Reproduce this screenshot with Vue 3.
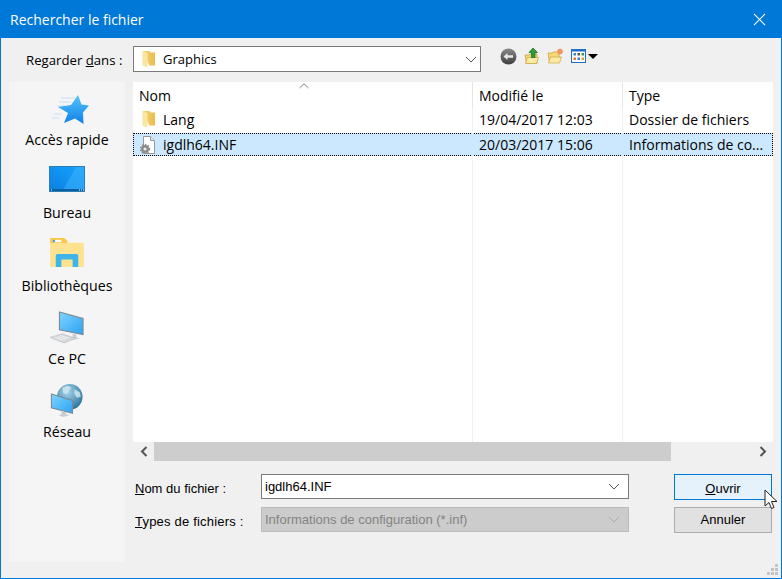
<template>
  <div class="window">
    <div class="titlebar">
      <span class="title">Rechercher le fichier</span>
      <svg class="close" width="13" height="13" viewBox="0 0 14 14"><path d="M1 1L13 13M13 1L1 13" stroke="#fff" stroke-width="1.1" fill="none" /></svg>
    </div>

    <div class="lookin">
      <label class="lookin-label">Regarder <u>d</u>ans :</label>
      <div class="combo">
        <svg class="folder" width="16" height="18" viewBox="0 0 16 18">
          <defs>
            <linearGradient id="fd" x1="0" y1="0" x2="1" y2="0"><stop offset="0" stop-color="#f6d777" /><stop offset="1" stop-color="#e9bb4c" /></linearGradient>
          </defs>
          <path d="M2.500 1h7l1 1.500h4.500v13l-6 0v-1z" fill="url(#fd)" />
          <path d="M2.500 1l5 2v14.500l-5-2z" fill="#fbe6a0" />
        </svg>
        <span class="combo-text">Graphics</span>
        <svg class="chev" width="12" height="7" viewBox="0 0 12 7"><path d="M1 1l5 5 5-5" stroke="#555" fill="none" /></svg>
      </div>
      <div class="tools">
        <svg width="17" height="17" viewBox="0 0 17 17">
          <defs>
            <linearGradient id="bk" x1="0" y1="0" x2="0" y2="1"><stop offset="0" stop-color="#8a8a8a" /><stop offset="1" stop-color="#3e3e3e" /></linearGradient>
          </defs>
          <circle cx="8.500" cy="8.500" r="8" fill="url(#bk)" />
          <path d="M3.500 8.500l4-3.500v2.300h5.500v2.400H7.500V12z" fill="#e8e8e8" />
        </svg>
        <svg width="16" height="18" viewBox="0 0 16 18">
          <path d="M1 8h4l1-1h7v9.500H2.500z" fill="#f5d778" stroke="#c9a540" stroke-width=".8" />
          <path d="M1.500 16.500l2-6h11l-2 6z" fill="#fbe9a6" stroke="#c9a540" stroke-width=".7" />
          <path d="M9 1L13.500 5.500H11V10.500H7.500V5.500H5z" fill="#2f9e3a" stroke="#14691f" stroke-width=".7" />
        </svg>
        <svg width="17" height="16" viewBox="0 0 17 16">
          <path d="M1 5h4l1-1h6v10.500H2.500z" fill="#f5d778" stroke="#c9a540" stroke-width=".8" />
          <path d="M1.500 15l2-6h11l-2 6z" fill="#fbe9a6" stroke="#c9a540" stroke-width=".7" />
          <circle cx="13" cy="3.500" r="2.500" fill="#ef7a3a" />
          <path d="M13 0v7M9.500 3.500h7M10.500 1l5 5M15.500 1l-5 5" stroke="#f2a26e" stroke-width=".7" />
        </svg>
        <div class="views">
          <svg width="15" height="14" viewBox="0 0 15 14">
            <rect x=".5" y=".5" width="14" height="13" fill="#fff" stroke="#1f6fc4" />
            <rect x="0" y="0" width="15" height="2.500" fill="#1f6fc4" />
            <rect x="2.500" y="4" width="2.500" height="2.500" fill="#3d7fd0" />
            <rect x="6.500" y="4" width="2.500" height="2.500" fill="#555" />
            <rect x="10.500" y="4" width="2.500" height="2.500" fill="#3f9a4a" />
            <rect x="2.500" y="8.500" width="2.500" height="2.500" fill="#e0703a" />
            <rect x="6.500" y="8.500" width="2.500" height="2.500" fill="#3d7fd0" />
            <rect x="10.500" y="8.500" width="2.500" height="2.500" fill="#d9a32e" />
          </svg>
          <span class="caret"></span>
        </div>
      </div>
    </div>

    <div class="content">
      <aside class="sidebar">
        <div class="place star">
          <svg width="38" height="30" viewBox="0 0 38 30">
            <defs>
              <linearGradient id="st" x1="0" y1="0" x2="0" y2="1"><stop offset="0" stop-color="#56c4ff" /><stop offset="1" stop-color="#0f80e6" /></linearGradient>
            </defs>
            <path d="M10 3h14M8 7h12M6 11h8M3 19h8M1 23h7" stroke="#c3e0f5" stroke-width="1" />
            <path d="M27 0l3.500 9.500 7.500 1-6 7 .500 11.500-8.500-5.500-11 4.500 4-10-10-6 13-2z" fill="url(#st)" />
          </svg>
          <span>Accès rapide</span>
        </div>
        <div class="place desk">
          <svg width="36" height="26" viewBox="0 0 36 26">
            <defs>
              <linearGradient id="ds" x1="0" y1="1" x2="1" y2="0"><stop offset="0" stop-color="#0a7fe0" /><stop offset="1" stop-color="#18a4ff" /></linearGradient>
            </defs>
            <rect x=".5" y=".5" width="35" height="25" fill="url(#ds)" stroke="#2a7fb8" />
            <path d="M14 24L27 1h8v23z" fill="#3eb0fb" opacity=".55" />
            <rect x="1" y="23" width="34" height="2" fill="#0b5f9e" />
            <path d="M30 24h1M32 24h1M34 24h1M2 24h1" stroke="#fff" />
          </svg>
          <span>Bureau</span>
        </div>
        <div class="place libs">
          <svg width="36" height="31" viewBox="0 0 36 31">
            <path d="M0 1a1 1 0 0 1 1-1h14l3.500 3v3H0z" fill="#f7c948" />
            <rect x="3" y="2" width="9" height="2.500" fill="#fff" />
            <rect x="3" y="2" width="2" height="2.500" fill="#2a9fe8" />
            <path d="M0 6h18l1-1h17v26H0z" fill="#fde28f" />
            <path d="M6 31V19a2 2 0 0 1 2-2h20a2 2 0 0 1 2 2v12h-6V23H12v8z" fill="#3db4ea" />
          </svg>
          <span>Bibliothèques</span>
        </div>
        <div class="place pc">
          <svg width="38" height="35" viewBox="0 0 38 35">
            <defs>
              <linearGradient id="sc" x1="0" y1="0" x2="1" y2="1"><stop offset="0" stop-color="#7fd4ff" /><stop offset="1" stop-color="#2ea2f2" /></linearGradient>
            </defs>
            <path d="M11 1l25 7v17l-25-5z" fill="url(#sc)" stroke="#7b8b97" stroke-width="1.200" />
            <path d="M25 24l4 1v3l4 1-10 2-3-1 5-2z" fill="#c7cdd2" />
            <path d="M1 28l13-4 14 5-12 5z" fill="#d5d8db" stroke="#b5b9bd" stroke-width=".6" />
            <path d="M6 28l9 3M9 27l9 3M12 26l9 3" stroke="#f3f4f5" stroke-width=".9" />
          </svg>
          <span>Ce PC</span>
        </div>
        <div class="place net">
          <svg width="36" height="36" viewBox="0 0 36 36">
            <defs>
              <radialGradient id="gl" cx=".4" cy=".3" r=".8"><stop offset="0" stop-color="#a8d6ea" /><stop offset="1" stop-color="#1c6a96" /></radialGradient>
            </defs>
            <circle cx="21" cy="14" r="14" fill="url(#gl)" />
            <path d="M13 4l6-2 4 2-3 3-2 4-4-1zM26 6l6 3 1 5-4 1-3-4z" fill="#d3e9f2" opacity=".8" />
            <path d="M1 11l23 7v14L1 26z" fill="url(#sc)" stroke="#7b8b97" stroke-width="1.200" />
            <path d="M12 29l5 2v2l4 1-7 2-5-2 3-1z" fill="#c7cdd2" />
          </svg>
          <span>Réseau</span>
        </div>
      </aside>

      <main class="main">
        <div class="list">
          <div class="row head">
            <div class="col name">Nom
              <svg class="sort" width="10" height="6" viewBox="0 0 10 6"><path d="M.5 5L5 .8 9.500 5" stroke="#888" fill="none" /></svg>
            </div>
            <div class="col date">Modifié le</div>
            <div class="col type">Type</div>
          </div>
          <div class="row item first">
            <div class="col name">
              <svg class="ficon" width="16" height="18" viewBox="0 0 16 18">
                <path d="M2.500 1h7l1 1.500h4.500v13l-6 0v-1z" fill="url(#fd)" />
                <path d="M2.500 1l5 2v14.500l-5-2z" fill="#fbe6a0" />
              </svg>
              Lang
            </div>
            <div class="col date">19/04/2017 12:03</div>
            <div class="col type">Dossier de fichiers</div>
          </div>
          <div class="row item selected">
            <div class="col name">
              <svg class="ficon" width="16" height="18" viewBox="0 0 16 18">
                <path d="M3.500.5h7l4 4v13h-11z" fill="#fff" stroke="#9a9a9a" />
                <path d="M10.500.5v4h4" fill="#e8e8e8" stroke="#9a9a9a" />
                <circle cx="5" cy="13" r="4" fill="#8b8b8b" />
                <circle cx="5" cy="13" r="4.600" fill="none" stroke="#8b8b8b" stroke-width="1.200" stroke-dasharray="1.500 1.500" />
                <circle cx="5" cy="13" r="1.500" fill="#eee" />
              </svg>
              igdlh64.INF
            </div>
            <div class="col date">20/03/2017 15:06</div>
            <div class="col type">Informations de co...</div>
          </div>
          <div class="filler">
            <div class="line name-l"></div>
            <div class="line date-l"></div>
          </div>
        </div>

        <div class="scrollbar">
          <div class="arrow">
            <svg width="8" height="11" viewBox="0 0 8 11"><path d="M6.500 1L2 5.500 6.500 10" stroke="#555" stroke-width="2" fill="none" /></svg>
          </div>
          <div class="thumb"></div>
          <div class="track"></div>
          <div class="arrow">
            <svg width="8" height="11" viewBox="0 0 8 11"><path d="M1.500 1L6 5.500 1.500 10" stroke="#555" stroke-width="2" fill="none" /></svg>
          </div>
        </div>

        <div class="form">
          <label class="flabel"><u>N</u>om du fichier :</label>
          <div class="field">
            <span>igdlh64.INF</span>
            <svg width="12" height="7" viewBox="0 0 12 7"><path d="M1 1l5 5 5-5" stroke="#555" fill="none" /></svg>
          </div>
          <button class="btn primary"><u>O</u>uvrir</button>

          <label class="flabel wide"><u>T</u>ypes de fichiers :</label>
          <div class="field disabled">
            <span>Informations de configuration (*.inf)</span>
            <svg width="12" height="7" viewBox="0 0 12 7"><path d="M1 1l5 5 5-5" stroke="#aaa" fill="none" /></svg>
          </div>
          <button class="btn">Annuler</button>
        </div>
      </main>
    </div>

    <svg class="cursor" width="14" height="22" viewBox="0 0 14 22">
      <path d="M1 1v16l4-3.500 2.500 6 2.500-1-2.500-6H13z" fill="#fff" stroke="#222" stroke-width="1" stroke-linejoin="round" />
    </svg>
    <svg class="grip" width="12" height="12" viewBox="0 0 12 12">
      <path d="M8 0h3v3H8zM4 4h3v3H4zM8 4h3v3H8zM0 8h3v3H0zM4 8h3v3H4zM8 8h3v3H8z" fill="#c4c4c4" />
    </svg>
  </div>
</template>

<script setup>
</script>

<style>
html, body { margin: 0; padding: 0; background: #f0f0f0; }
</style>

<style scoped>
.window { position: relative; width: 782px; height: 579px; box-sizing: border-box; border: 1px solid #0078d7; background: #f0f0f0; font-family: "Open Sans", "Liberation Sans", sans-serif; font-size: 14px; color: #000; overflow: hidden; display: flex; flex-direction: column; }
.titlebar { flex: none; height: 37px; background: #0078d7; display: flex; align-items: center; justify-content: space-between; padding: 0 9px; }
.title { color: #fff; font-size: 14px; }
.close { margin-right: 6px; }

.lookin { flex: none; height: 44px; display: flex; align-items: center; padding-left: 25px; }
.lookin-label { width: 107px; font-size: 13.200px; }
.combo { width: 348px; height: 26px; box-sizing: border-box; border: 1px solid #7a7a7a; background: #fff; display: flex; align-items: center; padding-left: 6px; margin-top: -2px; }
.combo-text { margin-left: 7px; flex: 1; font-size: 13px; }
.chev { margin-right: 3px; }
.tools { display: flex; align-items: center; gap: 7px; margin-left: 19px; margin-top: -8px; }
.views { display: flex; align-items: center; gap: 2px; }
.caret { border-left: 5px solid transparent; border-right: 5px solid transparent; border-top: 5px solid #000; }

.content { flex: 1; min-height: 0; display: flex; padding: 0 8px 16px 8px; gap: 8px; }
.sidebar { width: 116px; background: #f5f5f5; display: flex; flex-direction: column; padding-top: 10px; box-sizing: border-box; font-size: 14.200px; }
.place { height: 73px; display: flex; flex-direction: column; align-items: center; justify-content: flex-end; padding-bottom: 16px; box-sizing: border-box; white-space: nowrap; flex: none; }
.star { gap: 5px; }
.star svg { margin-right: -6px; }
.desk { gap: 11px; }
.libs { gap: 9px; }
.pc { gap: 5px; }
.net { gap: 5px; }

.main { flex: 1; min-width: 0; display: flex; flex-direction: column; }
.list { height: 360px; background: #fff; display: flex; flex-direction: column; flex: none; }
.row { display: flex; flex: none; }
.col { box-sizing: border-box; padding-left: 6px; white-space: nowrap; display: flex; align-items: center; position: relative; }
.name { width: 340px; }
.date { width: 150px; }
.type { flex: 1; }
.head { height: 26px; }
.head .col { border-right: 1px solid #e5e5e5; }
.head .type { border-right: none; }
.sort { position: absolute; left: 166px; top: 1px; }
.item { height: 24px; }
.item .col { border-right: 1px solid #eaf3fb; }
.item .type { border-right: none; }
.first .col { padding-bottom: 2px; }
.ficon { margin: 0 7px 0 1px; flex: none; }
.selected { height: 23px; margin-top: 1px; background: #cce8ff; outline: 1px dotted #000; outline-offset: -1px; }
.selected .col { border-right-color: #cce8ff; }
.filler { flex: 1; display: flex; position: relative; }
.line { box-sizing: border-box; border-right: 1px solid #eaf3fb; height: 100%; flex: none; }
.name-l { width: 340px; }
.date-l { width: 150px; }

.scrollbar { flex: none; height: 19px; display: flex; }
.arrow { flex: none; width: 21px; display: flex; align-items: center; justify-content: center; }
.thumb { width: 517px; background: #cdcdcd; flex: none; }
.track { flex: 1; }

.form { display: grid; grid-template-columns: 126px 368px 98px; column-gap: 0; row-gap: 8px; padding: 13px 0 0 2px; grid-auto-rows: 25px; font-family: "Liberation Sans", sans-serif; font-size: 13px; align-items: center; }
.flabel { white-space: nowrap; padding-top: 3px; }
.flabel.wide { letter-spacing: .2px; }
.field { height: 25px; box-sizing: border-box; border: 1px solid #7a7a7a; background: #fff; display: flex; align-items: center; justify-content: space-between; padding: 0 8px 0 3px; }
.field.disabled { background: #ccc; border-color: #bbb; color: #838383; }
.btn { justify-self: end; width: 98px; height: 26px; box-sizing: border-box; border: 1px solid #adadad; background: #e1e1e1; font: inherit; color: #000; padding: 0; margin-right: -45px; }
.btn.primary { border: 1px solid #0078d7; background: #e5f1fb; padding-top: 3px; }

.cursor { position: absolute; left: 763px; top: 488px; }
.grip { position: absolute; right: 2px; bottom: 2px; }
</style>
